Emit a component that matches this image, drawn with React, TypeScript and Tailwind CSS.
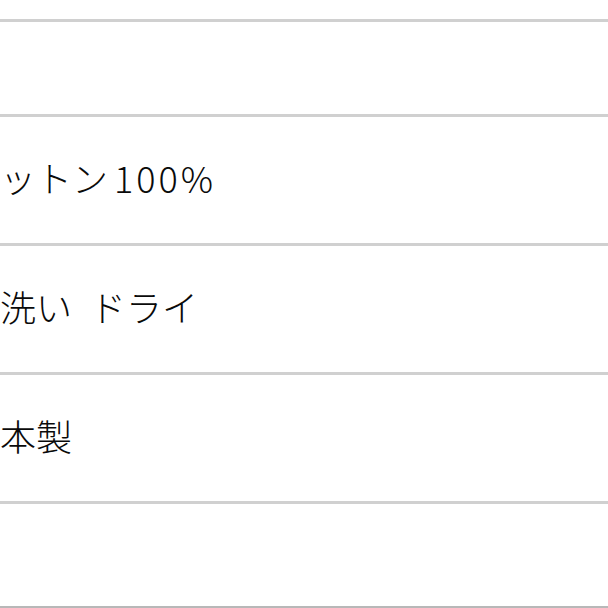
const Line = () => <div className="h-[3px] w-full bg-[#d0d0d0]" />;

const Row = ({ children }: { children: React.ReactNode }) => (
  <div>
    <Line />
    <div className="flex h-[126px] items-center pb-[6px] text-[36px] font-[300] leading-none">
      {children}
    </div>
  </div>
);

export default function App() {
  return (
    <div
      className="flex h-[608px] w-[608px] flex-col overflow-hidden bg-white text-[#0a0a0a]"
      style={{ fontFamily: '"Noto Sans CJK JP", "Noto Sans", sans-serif' }}
    >
      <div className="h-[19px]" />
      <Line />
      <div className="h-[92px]" />
      <Row>
        ットン<span className="ml-[6px] tracking-[3px]">100%</span>
      </Row>
      <Row>
        洗い<span className="ml-[18px]">ドライ</span>
      </Row>
      <Row>本製</Row>
      <Line />
      <div className="h-[102px]" />
      <div className="h-[2px] w-full bg-[#b8b8b8]" />
    </div>
  );
}
